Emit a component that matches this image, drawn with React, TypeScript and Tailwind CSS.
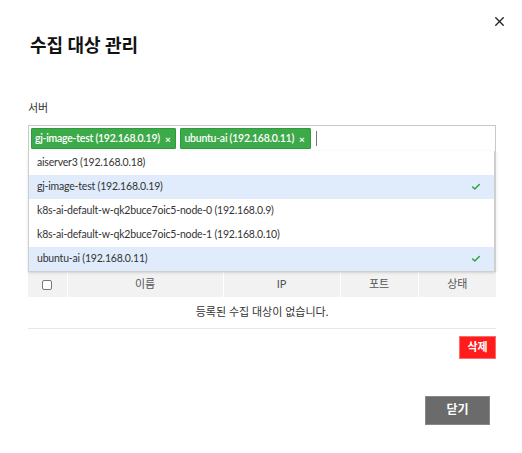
import React from 'react';
import { X, Check } from 'lucide-react';

interface Server {
  id: string;
  name: string;
  ip: string;
  selected: boolean;
}

const servers: Server[] = [
  { id: '1', name: 'aiserver3', ip: '192.168.0.18', selected: false },
  { id: '2', name: 'gj-image-test', ip: '192.168.0.19', selected: true },
  { id: '3', name: 'k8s-ai-default-w-qk2buce7oic5-node-0', ip: '192.168.0.9', selected: false },
  { id: '4', name: 'k8s-ai-default-w-qk2buce7oic5-node-1', ip: '192.168.0.10', selected: false },
  { id: '5', name: 'ubuntu-ai', ip: '192.168.0.11', selected: true },
];

const font = { fontFamily: 'Lato, "Noto Sans CJK KR", sans-serif' };

const Tag: React.FC<{ label: string }> = ({ label }) => (
  <span className="flex h-[21px] items-center gap-[5px] rounded-[1px] border border-[#2f9a3c] bg-[#3daa4a] pl-[3px] pr-[5px] text-[10.5px] font-semibold tracking-[-0.25px] text-white">
    {label}
    <span className="text-[10px] font-bold leading-none">×</span>
  </span>
);

const App: React.FC = () => {
  const picked = servers.filter((s) => s.selected);

  return (
    <div className="relative h-[453px] w-full bg-white text-[#222]" style={font}>
      <button className="absolute right-[15px] top-[14px] text-[#222]">
        <X size={15} strokeWidth={2.2} />
      </button>

      <div className="pl-[28px] pr-[26px]">
        <h2 className="pt-[32px] pl-[2px] text-[18px] font-bold leading-[26px] text-[#111]">수집 대상 관리</h2>

        <p className="mt-[42px] text-[11px] leading-[16px] text-[#333]">서버</p>

        <div className="relative mt-[9px]">
          {/* multi-select input */}
          <div className="flex h-[27px] items-center gap-[4px] border border-[#c8c8c8] pl-[2px]">
            {picked.map((s) => (
              <Tag key={s.id} label={`${s.name} (${s.ip})`} />
            ))}
            <span className="ml-[1px] h-[15px] w-px bg-[#777]" />
          </div>

          {/* open option list */}
          <ul className="absolute left-0 right-0 top-[26px] z-10 border border-t-0 border-r-2 border-[#cfcfcf] bg-white shadow-sm">
            {servers.map((s) => (
              <li
                key={s.id}
                className={`flex h-[24px] items-center justify-between pl-[8px] pr-[13px] text-[10.5px] tracking-[-0.2px] text-[#333] ${
                  s.selected ? 'bg-[#e0ecfc]' : ''
                }`}
              >
                <span>
                  {s.name} ({s.ip})
                </span>
                {s.selected && <Check size={10} strokeWidth={3.5} className="text-[#2aa33a]" />}
              </li>
            ))}
          </ul>

          {/* target table */}
          <table className="mt-[120px] w-full border-collapse text-[11px]">
            <thead>
              <tr className="h-[25px] bg-[#f2f2f2] text-[#555]">
                <th className="w-[39px] border-r border-white font-normal">
                  <span className="mx-auto block h-[10px] w-[10px] rounded-[2px] border border-[#777] bg-white" />
                </th>
                <th className="w-[156px] border-r border-white font-normal">이름</th>
                <th className="w-[117px] border-r border-white font-normal">IP</th>
                <th className="w-[78px] border-r border-white font-normal">포트</th>
                <th className="font-normal">상태</th>
              </tr>
            </thead>
            <tbody>
              <tr className="h-[31px] border-b border-[#e8e8e8]">
                <td colSpan={5} className="text-center text-[#333]">
                  등록된 수집 대상이 없습니다.
                </td>
              </tr>
            </tbody>
          </table>

          <div className="mt-[7px] flex justify-end">
            <button className="h-[23px] w-[37px] border border-[#ff6a6a] bg-[#ff1c1c] text-[11px] font-bold text-white">
              삭제
            </button>
          </div>

          <div className="mt-[37px] flex justify-end pr-[6px]">
            <button className="h-[29px] w-[65px] border border-[#888] bg-[#6b6b6b] text-[12px] font-bold text-white">
              닫기
            </button>
          </div>
        </div>
      </div>
    </div>
  );
};

export default App;
